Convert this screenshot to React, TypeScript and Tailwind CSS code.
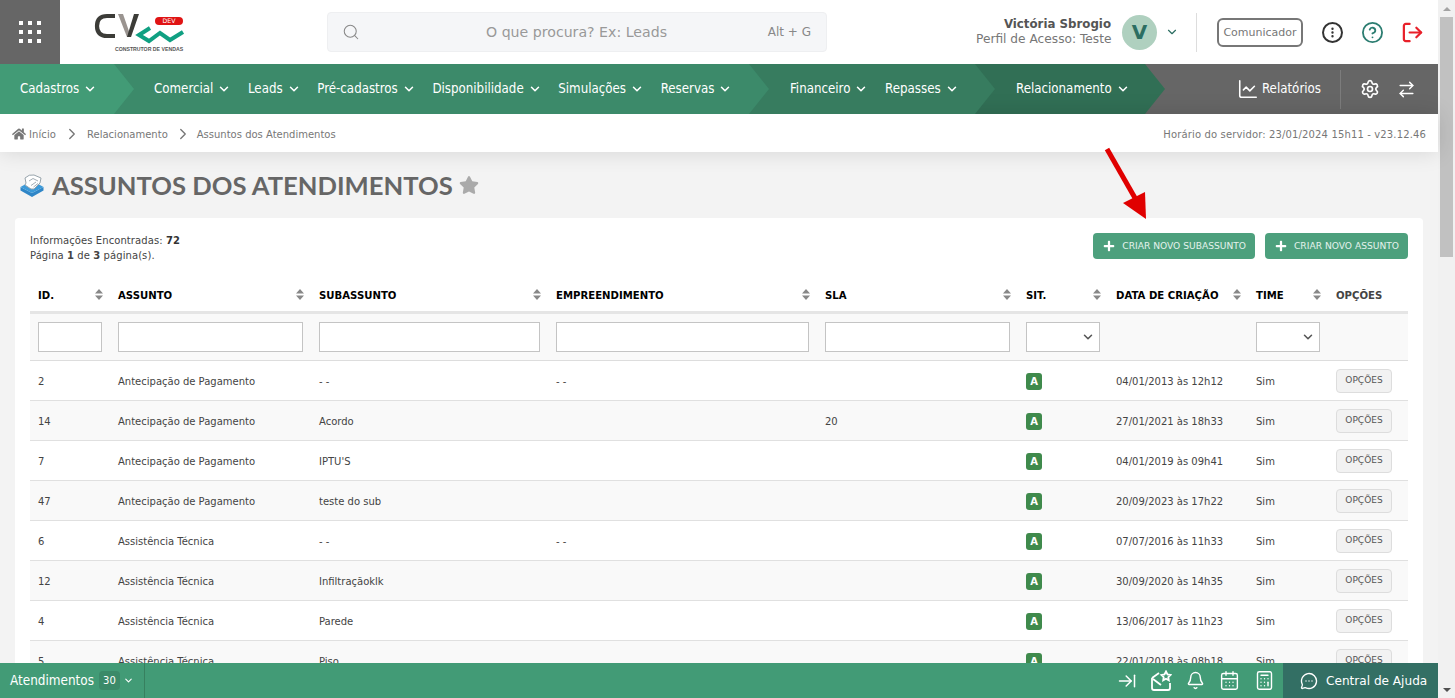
import { Search, ChevronDown, ChevronRight, EllipsisVertical, CircleHelp, LogOut, ChartLine, Settings, ArrowRightLeft, ArrowRightToLine, Bell, CalendarDays, Calculator, MessageCircleMore } from "lucide-react";
import { FaHome, FaStar, FaPlus } from "react-icons/fa";

const rows = [
  ["2", "Antecipação de Pagamento", "- -", "- -", "", "04/01/2013 às 12h12"],
  ["14", "Antecipação de Pagamento", "Acordo", "", "20", "27/01/2021 às 18h33"],
  ["7", "Antecipação de Pagamento", "IPTU'S", "", "", "04/01/2019 às 09h41"],
  ["47", "Antecipação de Pagamento", "teste do sub", "", "", "20/09/2023 às 17h22"],
  ["6", "Assistência Técnica", "- -", "- -", "", "07/07/2016 às 11h33"],
  ["12", "Assistência Técnica", "Infiltraçãoklk", "", "", "30/09/2020 às 14h35"],
  ["4", "Assistência Técnica", "Parede", "", "", "13/06/2017 às 11h23"],
  ["5", "Assistência Técnica", "Piso", "", "", "22/01/2018 às 08h18"],
];

const gridCols = "grid grid-cols-[80px_201px_237px_269px_201px_90px_140px_80px_80px]";
const cell = "px-2 pt-[2px]";

function Sort() {
  return (
    <svg width="8" height="11" viewBox="0 0 8 11" className="shrink-0">
      <path d="M4 0 L8 4.4 H0 Z M0 6.6 H8 L4 11 Z" fill="#888" />
    </svg>
  );
}

function Head({ label, sort = true }: { label: string; sort?: boolean }) {
  return (
    <div className="flex items-center justify-between pl-2 pr-[7px]">
      <span className={sort ? "pt-[2px] text-[10.15px] font-bold text-black" : "pt-[2px] text-[10.15px] font-bold text-[#444]"}>{label}</span>
      {sort && <Sort />}
    </div>
  );
}

function NavItem({ label }: { label: string }) {
  return (
    <span className="flex items-center gap-[4px] text-white text-[13.2px] font-['DejaVu_Sans_Condensed','DejaVu_Sans',sans-serif]">
      {label}
      <ChevronDown size={14} strokeWidth={2.6} />
    </span>
  );
}

function Logo() {
  return (
    <svg width="100" height="44" viewBox="0 0 100 44" className="block">
      <path d="M22 6 H14 Q4 6 4 16 Q4 26 14 26 H22" fill="none" stroke="#3c3c38" strokeWidth="4.2" />
      <path d="M25 4 L34 27 H38 L30 4 Z" fill="#9a9490" />
      <path d="M34 27 L41 4 H46 L38 27 Z" fill="#3c3c38" />
      <path d="M57 18 L46 25 L56 31 L67 23 L77 30 L90 22" fill="none" stroke="#10a082" strokeWidth="4" />
      <rect x="62" y="7" width="28" height="8" rx="4" fill="#e01414" />
      <text x="76" y="13.4" textAnchor="middle" fontSize="6.2" fill="#fff" fontFamily="DejaVu Sans">DEV</text>
      <text x="56" y="40.5" textAnchor="middle" fontSize="5.2" fontWeight="700" fill="#555" fontFamily="Liberation Sans">CONSTRUTOR DE VENDAS</text>
    </svg>
  );
}

export default function App() {
  return (
    <div className="relative flex h-[698px] w-[1455px] overflow-hidden bg-[#f3f3f3] font-['DejaVu_Sans',sans-serif]">
      <div className="flex w-[1438px] shrink-0 flex-col">
        {/* header */}
        <header className="flex h-16 items-center bg-white">
          <div className="grid h-16 w-[60px] place-items-center bg-[#666]">
            <div className="grid grid-cols-3 gap-[4.5px]">
              {Array.from({ length: 9 }).map((_, i) => (
                <span key={i} className="h-[4.5px] w-[4.5px] bg-white" />
              ))}
            </div>
          </div>
          <div className="ml-[33px] w-[234px]"><Logo /></div>
          <div className="flex h-10 w-[500px] items-center rounded border border-[#eeeff1] bg-[#f5f6f8] pl-[14px] pr-[15px]">
            <Search size={18} strokeWidth={1.4} className="text-[#888]" />
            <span className="ml-[126px] pt-[2px] text-[14.15px] text-[#999]">O que procura? Ex: Leads</span>
            <span className="ml-auto text-[12px] text-[#888]">Alt + G</span>
          </div>
          <div className="ml-[149px] w-[135px] whitespace-nowrap text-right leading-[15px]">
            <div className="text-[11.8px] font-bold text-[#555]">Victória Sbrogio</div>
            <div className="text-[12.2px] text-[#777]">Perfil de Acesso: Teste</div>
          </div>
          <div className="ml-[11px] grid h-[35px] w-[35px] place-items-center rounded-full bg-[#afd0bf] text-[20px] font-bold text-[#2c6e62]">V</div>
          <ChevronDown size={14} className="ml-[8px] text-[#2c6e62]" />
          <div className="ml-[17px] h-[39px] w-px bg-[#ddd]" />
          <div className="ml-5 grid h-[29px] w-[86px] place-items-center rounded-md border-2 border-[#777] pt-[2px] text-[11px] text-[#777]">Comunicador</div>
          <div className="relative ml-[19px] grid h-[21px] w-[21px] place-items-center rounded-full border-2 border-[#333]">
            <EllipsisVertical size={13} strokeWidth={2.4} className="text-[#333]" />
          </div>
          <CircleHelp size={23} strokeWidth={1.9} className="ml-[18px] text-[#2c7d71]" />
          <LogOut size={23} strokeWidth={2.3} className="ml-[17px] text-[#e8202a] [transform:scaleX(-1)_rotate(180deg)]" />
        </header>

        {/* nav */}
        <nav className="flex h-[50px] bg-[#666]">
          <div className="relative z-40 flex h-full w-[134px] items-center bg-[#429b76] pl-5 [clip-path:polygon(0_0,114px_0,100%_50%,114px_100%,0_100%)]">
            <NavItem label="Cadastros" />
          </div>
          <div className="relative z-30 -ml-5 flex h-full w-[655px] items-center gap-[16.6px] bg-[#3c8a6a] pl-[40px] [clip-path:polygon(0_0,635px_0,100%_50%,635px_100%,0_100%)]">
            <NavItem label="Comercial" />
            <NavItem label="Leads" />
            <NavItem label="Pré-cadastros" />
            <NavItem label="Disponibilidade" />
            <NavItem label="Simulações" />
            <NavItem label="Reservas" />
          </div>
          <div className="relative z-20 -ml-5 flex h-full w-[246px] items-center gap-[16.6px] bg-[#377c5f] pl-[41px] [clip-path:polygon(0_0,226px_0,100%_50%,226px_100%,0_100%)]">
            <NavItem label="Financeiro" />
            <NavItem label="Repasses" />
          </div>
          <div className="relative z-10 -ml-5 flex h-full w-[190px] items-center bg-[#316f55] pl-[41px] [clip-path:polygon(0_0,170px_0,100%_50%,170px_100%,0_100%)]">
            <NavItem label="Relacionamento" />
          </div>
          <div className="flex flex-1 items-center justify-end pr-[22px] text-white">
            <ChartLine size={22} strokeWidth={1.7} />
            <span className="ml-[3px] text-[13.2px] font-['DejaVu_Sans_Condensed','DejaVu_Sans',sans-serif]">Relatórios</span>
            <div className="ml-[19px] h-[39px] w-px bg-[#7c7c7c]" />
            <Settings size={20} strokeWidth={2} className="ml-[19px]" />
            <ArrowRightLeft size={19} strokeWidth={1.8} className="ml-[17px]" />
          </div>
        </nav>

        {/* breadcrumb */}
        <div className="relative z-10 flex h-[38px] items-center bg-white pl-3 pr-3 pt-[2px] text-[10px] text-[#777] shadow-[0_0_22px_rgba(0,0,0,0.13)]">
          <FaHome size={14} className="text-[#777]" />
          <span className="ml-[3px] tracking-[0.1px]">Início</span>
          <ChevronRight size={18} strokeWidth={1.8} className="ml-[7px]" />
          <span className="ml-[6px]">Relacionamento</span>
          <ChevronRight size={18} strokeWidth={1.8} className="ml-[6px]" />
          <span className="ml-[5px]">Assuntos dos Atendimentos</span>
          <span className="ml-auto tracking-[0.14px] text-[#777]">Horário do servidor: 23/01/2024 15h11 - v23.12.46</span>
        </div>

        {/* title */}
        <div className="flex h-[66px] items-center pl-5">
          <svg width="24" height="24" viewBox="0 0 24 24" className="mr-[8px] shrink-0">
            <path d="M0.5 14 L12 20 L23.5 14 V17.5 L12 24 L0.5 17.5 Z" fill="#2f86c7" />
            <path d="M0.5 14 L12 7.5 L23.5 14 L12 20 Z" fill="#3b9ad9" />
            <path d="M6 10 L5 5 Q9 1 14 2 L21 5 L20 10 L14 16 L11 16 L5 12 Z" fill="#fff" stroke="#98a4ac" strokeWidth="1" />
            <path d="M9 8 L13 5.5 L18 8 M11 12.5 L16 9 M13.5 14 L18 10.5" fill="none" stroke="#98a4ac" strokeWidth="0.9" />
          </svg>
          <h1 className="font-['Lato',sans-serif] text-[25.6px] font-bold text-[#666]">ASSUNTOS DOS ATENDIMENTOS</h1>
          <FaStar size={20} className="ml-[6px] text-[#aaa]" />
        </div>

        {/* card */}
        <main className="mx-[15px] flex-1 rounded-t bg-white px-[15px] pt-[15px]">
          <div className="flex h-[46px] items-start justify-between">
            <div className="text-[10px] leading-[15px] tracking-[0.08px] text-[#444]">
              <div>Informações Encontradas: <b className="text-[#333]">72</b></div>
              <div>Página <b>1</b> de <b>3</b> página(s).</div>
            </div>
            <div className="flex gap-[10px]">
              {["CRIAR NOVO SUBASSUNTO", "CRIAR NOVO ASSUNTO"].map((t) => (
                <button key={t} className="flex h-[26px] items-center gap-[7px] rounded-[4px] bg-[#4da07d] pl-[10px] pr-[9px] text-[9.15px] text-[#e4f2ec]">
                  <FaPlus size={12} className="text-white" />
                  <span className="pt-px">{t}</span>
                </button>
              ))}
            </div>
          </div>

          <div className={`${gridCols} h-[35px] items-center border-b-[3px] border-[#e5e5e5]`}>
            <Head label="ID." />
            <Head label="ASSUNTO" />
            <Head label="SUBASSUNTO" />
            <Head label="EMPREENDIMENTO" />
            <Head label="SLA" />
            <Head label="SIT." />
            <Head label="DATA DE CRIAÇÃO" />
            <Head label="TIME" />
            <Head label="OPÇÕES" sort={false} />
          </div>

          <div className={`${gridCols} h-[47px] items-center border-b border-[#ddd] bg-[#f9f9f9]`}>
            {[0, 1, 2, 3, 4].map((i) => (
              <div key={i} className="px-2"><input className="block h-[30px] w-full border border-[#c4c4c4] bg-white" /></div>
            ))}
            <div className="px-2">
              <div className="flex h-[30px] w-[74px] items-center justify-end border border-[#c4c4c4] bg-white pr-[4px]">
                <ChevronDown size={14} strokeWidth={2.6} className="text-[#555]" />
              </div>
            </div>
            <div />
            <div className="px-2">
              <div className="flex h-[30px] w-[64px] items-center justify-end border border-[#c4c4c4] bg-white pr-[4px]">
                <ChevronDown size={14} strokeWidth={2.6} className="text-[#555]" />
              </div>
            </div>
            <div />
          </div>

          {rows.map((r, i) => (
            <div key={r[0]} className={`${gridCols} h-10 items-center border-b border-[#e0e0e0] text-[10px] text-[#444] ${i % 2 === 1 ? "bg-[#f9f9f9]" : "bg-white"}`}>
              <div className={cell}>{r[0]}</div>
              <div className={cell}>{r[1]}</div>
              <div className={cell}>{r[2]}</div>
              <div className={cell}>{r[3]}</div>
              <div className={cell}>{r[4]}</div>
              <div className="px-2">
                <span className="mt-px grid h-[17px] w-4 place-items-center rounded-[3px] bg-[#3f8a4c] text-[10px] font-bold text-white">A</span>
              </div>
              <div className={cell}>{r[5]}</div>
              <div className={cell}>Sim</div>
              <div className="px-2">
                <button className="block h-6 w-14 rounded border border-[#ddd] bg-[#f2f2f2] text-[9px] text-[#555]">OPÇÕES</button>
              </div>
            </div>
          ))}
        </main>
      </div>

      {/* scrollbar */}
      <div className="flex w-[17px] flex-col items-center bg-[#f1f1f1]">
        <div className="flex h-[17px] items-center justify-center">
          <span className="h-0 w-0 border-x-[4px] border-b-[4px] border-x-transparent border-b-[#a3a3a3]" />
        </div>
        <div className="h-[240px] w-[13px] bg-[#c1c1c1]" />
        <div className="mt-auto flex h-[17px] items-center justify-center">
          <span className="h-0 w-0 border-x-[4px] border-t-[4px] border-x-transparent border-t-[#505050]" />
        </div>
      </div>

      {/* annotation arrow */}
      <svg width="60" height="80" viewBox="0 0 60 80" className="absolute left-[1095px] top-[145px] z-20">
        <path d="M12 4 L40 53" stroke="#e00000" strokeWidth="5" />
        <path d="M28 58 L50 47 L51 74 Z" fill="#e00000" />
      </svg>

      {/* bottom bar */}
      <footer className="absolute bottom-0 left-0 z-30 flex h-[35px] w-[1438px] items-stretch bg-[#429b76] text-white">
        <div className="flex w-[145px] items-center border-r border-[#37805f] pl-[10px] font-['DejaVu_Sans_Condensed','DejaVu_Sans',sans-serif]">
          <span className="pt-[2px] text-[13.4px]">Atendimentos</span>
          <span className="ml-[5px] grid h-[19px] w-[21px] place-items-center rounded bg-[#3b8a69] font-['DejaVu_Sans',sans-serif] text-[10px]">30</span>
          <ChevronDown size={11} strokeWidth={2.4} className="ml-[3px]" />
        </div>
        <div className="ml-auto flex items-center pr-[8px]">
          <ArrowRightToLine size={20} strokeWidth={1.8} />
          <svg width="22" height="22" viewBox="0 0 22 22" fill="none" stroke="#fff" strokeWidth="1.8" className="ml-[13px]">
            <path d="M2 8 V18 Q2 20 4 20 H18 Q20 20 20 18 V13" />
            <path d="M2 8 L9 3 M3 9 L11 15" />
            <path d="M16 1.5 L17.5 4.5 L20.5 5 L18.3 7.2 L18.8 10.3 L16 8.8 L13.2 10.3 L13.7 7.2 L11.5 5 L14.5 4.5 Z" />
          </svg>
          <Bell size={19} strokeWidth={1.8} className="ml-[14px]" />
          <CalendarDays size={21} strokeWidth={1.6} className="ml-[14px]" />
          <Calculator size={21} strokeWidth={1.6} className="ml-[14px]" />
        </div>
        <div className="flex w-[155px] items-center bg-[#336f64] pl-[17px]">
          <MessageCircleMore size={18} strokeWidth={1.8} />
          <span className="ml-[8px] pt-[2px] text-[12.1px]">Central de Ajuda</span>
        </div>
      </footer>
    </div>
  );
}
